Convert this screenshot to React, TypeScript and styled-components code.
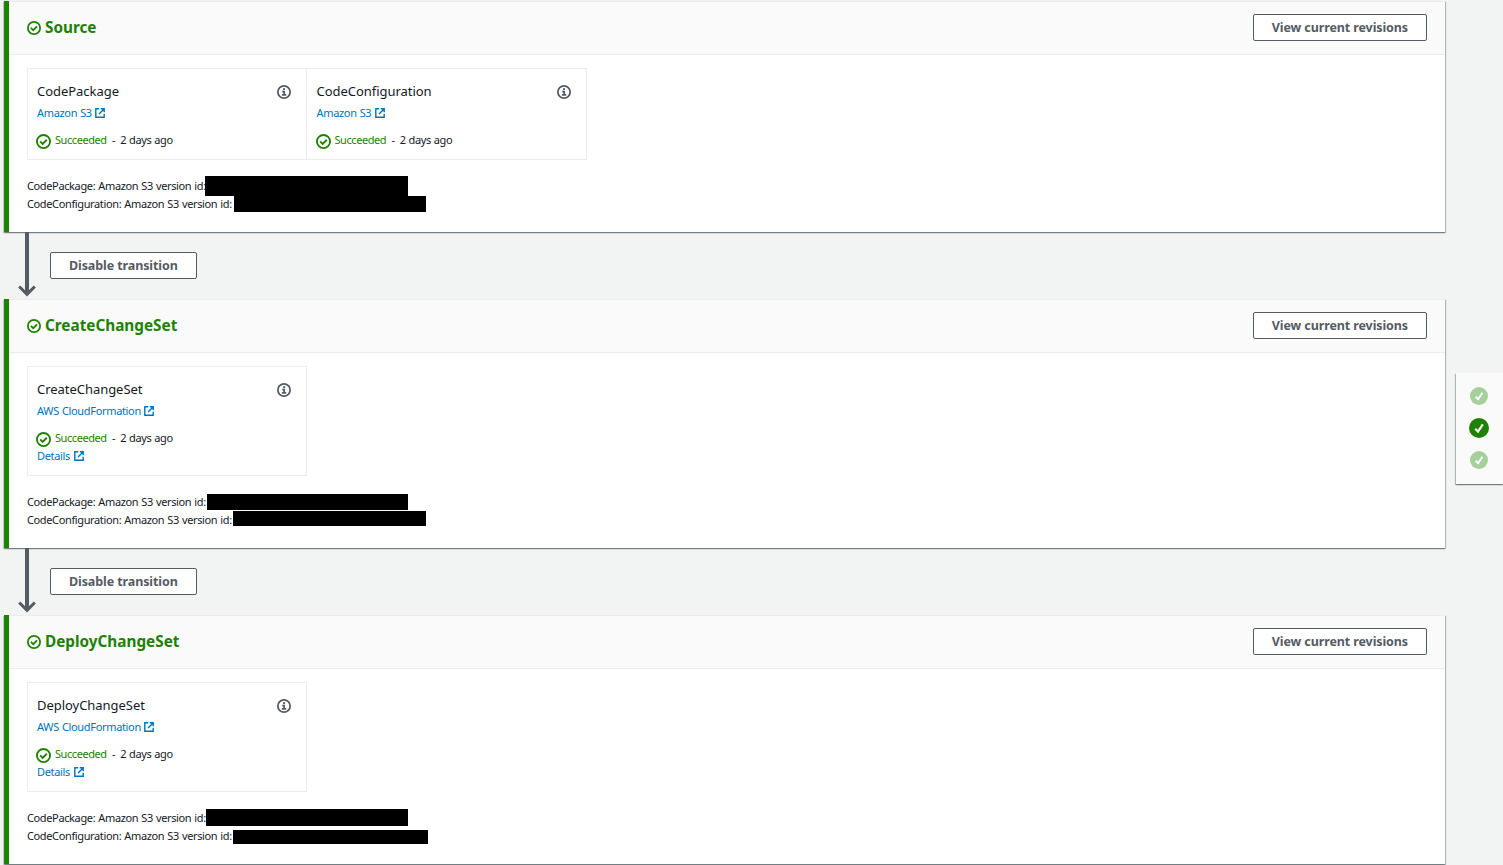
import React from "react";
import styled, { createGlobalStyle } from "styled-components";

interface Mask {
	left: number;
	top: number;
	width: number;
	height: number;
}

interface ActionData {
	name: string;
	provider: string;
	hasDetails?: boolean;
}

interface StageData {
	name: string;
	actions: ActionData[];
	masks: Mask[];
}

const stages: StageData[] = [
	{
		name: "Source",
		actions: [
			{ name: "CodePackage", provider: "Amazon S3" },
			{ name: "CodeConfiguration", provider: "Amazon S3" },
		],
		masks: [
			{ left: 178, top: -1, width: 203, height: 20 },
			{ left: 207, top: 1, width: 192, height: 16 },
		],
	},
	{
		name: "CreateChangeSet",
		actions: [
			{ name: "CreateChangeSet", provider: "AWS CloudFormation", hasDetails: true },
		],
		masks: [
			{ left: 180, top: 1, width: 201, height: 16 },
			{ left: 206, top: 0, width: 193, height: 15 },
		],
	},
	{
		name: "DeployChangeSet",
		actions: [
			{ name: "DeployChangeSet", provider: "AWS CloudFormation", hasDetails: true },
		],
		masks: [
			{ left: 179, top: 0, width: 202, height: 17 },
			{ left: 206, top: 3, width: 195, height: 14 },
		],
	},
];

const revisions = ["CodePackage", "CodeConfiguration"];

const CheckCircle: React.FC<{ size: number }> = ({ size }) => (
	<Icon width={size} height={size} viewBox="0 0 16 16">
		<circle cx="8" cy="8" r="7" stroke="#1d8102" strokeWidth="2" />
		<path d="M4.4 7.9l2.7 2.6 4.4-4.4" stroke="#1d8102" strokeWidth="2" />
	</Icon>
);

const InfoCircle: React.FC = () => (
	<Icon width={14} height={14} viewBox="0 0 16 16">
		<circle cx="8" cy="8" r="7" stroke="#545b64" strokeWidth="2" />
		<path d="M5.6 11.3h5M6 7.6h2.2v3.5" stroke="#545b64" strokeWidth="2" />
		<path d="M7 3.6h2.2v2.2H7z" fill="#545b64" />
	</Icon>
);

const External: React.FC = () => (
	<Icon width={10} height={10} viewBox="0 0 10 10">
		<path d="M4.2.8H.8v8.4h8.4V5.8" stroke="#0073bb" strokeWidth="1.4" />
		<path d="M5.8.8h3.4v3.4M9 1L4.1 5.9" stroke="#0073bb" strokeWidth="1.4" />
	</Icon>
);

const Action: React.FC<{ action: ActionData }> = ({ action }) => (
	<ActionCard>
		<ActionHead>
			<ActionName>{action.name}</ActionName>
			<InfoButton>
				<InfoCircle />
			</InfoButton>
		</ActionHead>
		<ProviderLink>
			{action.provider}
			<External />
		</ProviderLink>
		<StatusRow>
			<StatusIcon>
				<CheckCircle size={15} />
			</StatusIcon>
			<Succeeded>Succeeded</Succeeded>
			<Dash>-</Dash>
			<span>2 days ago</span>
		</StatusRow>
		{action.hasDetails && (
			<DetailsLink>
				Details
				<External />
			</DetailsLink>
		)}
	</ActionCard>
);

const Stage: React.FC<{ stage: StageData }> = ({ stage }) => (
	<StagePanel>
		<StageHeader>
			<StageTitle>
				<CheckCircle size={14} />
				<StageName>{stage.name}</StageName>
			</StageTitle>
			<Button>View current revisions</Button>
		</StageHeader>
		<StageBody>
			<Actions>
				{stage.actions.map((action) => (
					<Action key={action.name} action={action} />
				))}
			</Actions>
			<Revisions>
				{revisions.map((name, index) => (
					<Revision key={name}>
						{name}: Amazon S3 version id:
						<Redacted {...toMask(stage.masks[index])} />
					</Revision>
				))}
			</Revisions>
		</StageBody>
	</StagePanel>
);

const toMask = (mask: Mask) => ({
	$left: mask.left,
	$top: mask.top,
	$width: mask.width,
	$height: mask.height,
});

const App: React.FC = () => {
	return (
		<>
			<GlobalStyle />
			<Page>
				<Pipeline>
					{stages.map((stage, index) => (
						<React.Fragment key={stage.name}>
							{index > 0 && (
								<Transition>
									<Icon width={18} height={65} viewBox="0 0 18 65">
										<path d="M9 0v61" stroke="#545b64" strokeWidth="4" />
										<path d="M1.2 54.5L9 62.3l7.8-7.8" stroke="#545b64" strokeWidth="3" />
									</Icon>
									<Button>Disable transition</Button>
								</Transition>
							)}
							<Stage stage={stage} />
						</React.Fragment>
					))}
				</Pipeline>
				<Navigator>
					{stages.map((stage, index) => (
						<NavDot key={stage.name} $active={index === 1}>
							<Icon width={12} height={12} viewBox="0 0 12 12">
								<path d="M2.2 6.8l2.8 2.8 4.8-7.2" stroke="#fff" strokeWidth="2.2" />
							</Icon>
						</NavDot>
					))}
				</Navigator>
			</Page>
		</>
	);
};

export default App;

const GlobalStyle = createGlobalStyle`
	* {
		box-sizing: border-box;
	}
	body {
		margin: 0;
		background: #f2f3f3;
		font-family: "Noto Sans", "Open Sans", sans-serif;
		overflow: hidden;
	}
`;
const Page = styled.div`
	display: flex;
	justify-content: space-between;
	height: 865px;
	padding: 1px 0 0 4px;
	overflow: hidden;
`;
const Pipeline = styled.div`
	width: 1441px;
`;
const Icon = styled.svg`
	display: block;
	flex-shrink: 0;
	fill: none;
`;
const StagePanel = styled.section`
	border-left: 5px solid #1d8102;
	background: #fff;
	box-shadow: 0 1px 1px 0 rgba(0, 28, 36, 0.28), 1px 1px 1px 0 rgba(0, 28, 36, 0.24),
		-1px 1px 1px 0 rgba(0, 28, 36, 0.15);
`;
const StageHeader = styled.header`
	display: flex;
	justify-content: space-between;
	align-items: flex-start;
	height: 54px;
	padding: 12px 18px 0;
	border-top: 1px solid #eaeded;
	border-bottom: 1px solid #eaeded;
	background: #fafafa;
`;
const StageTitle = styled.h2`
	display: flex;
	align-items: center;
	gap: 4px;
	height: 28px;
	margin: 0;
	color: #1d8102;
	font-size: 15.3px;
	font-weight: 700;
	line-height: 22px;
`;
const StageName = styled.span`
	margin-top: -2px;
`;
const Button = styled.button`
	height: 27px;
	padding: 0 18px;
	border: 1px solid #545b64;
	border-radius: 2px;
	background: #fff;
	color: #545b64;
	font-family: inherit;
	font-size: 12.5px;
	font-weight: 700;
	line-height: 25px;
	letter-spacing: -0.1px;
	white-space: nowrap;
`;
const StageBody = styled.div`
	padding: 13px 18px 19px;
`;
const Actions = styled.div`
	display: flex;
`;
const ActionCard = styled.div`
	width: 280px;
	padding: 12px 15px 10px 9px;
	border: 1px solid #eaeded;

	& + & {
		padding-left: 9.5px;
		border-left: 0;
	}
`;
const ActionHead = styled.div`
	display: flex;
	justify-content: space-between;
	align-items: center;
	height: 20px;
`;
const ActionName = styled.div`
	color: #16191f;
	font-size: 13px;
	line-height: 20px;
	letter-spacing: -0.04px;
`;
const InfoButton = styled.span`
	margin-top: 2px;
`;
const ProviderLink = styled.a`
	display: flex;
	align-items: center;
	gap: 3.5px;
	margin-top: 3px;
	color: #0073bb;
	font-size: 11px;
	line-height: 18px;
	letter-spacing: -0.33px;
	word-spacing: 0.5px;
`;
const DetailsLink = styled(ProviderLink)`
	margin-top: 0;
`;
const StatusRow = styled.div`
	display: flex;
	align-items: center;
	height: 18px;
	margin-top: 9px;
	color: #16191f;
	font-size: 11px;
	line-height: 18px;
	letter-spacing: -0.38px;
	word-spacing: 0.4px;
`;
const StatusIcon = styled.span`
	margin: 2px 4px 0 -1px;
`;
const Succeeded = styled.span`
	color: #1d8102;
	letter-spacing: -0.44px;
`;
const Dash = styled.span`
	margin: 0 5px 0 5.5px;
`;
const Revisions = styled.div`
	margin-top: 17px;
`;
const Revision = styled.div`
	position: relative;
	color: #16191f;
	font-size: 11px;
	line-height: 18px;
	letter-spacing: -0.37px;
	word-spacing: 0.6px;
`;
const Redacted = styled.span<{
	$left: number;
	$top: number;
	$width: number;
	$height: number;
}>`
	position: absolute;
	left: ${({ $left }) => $left}px;
	top: ${({ $top }) => $top}px;
	width: ${({ $width }) => $width}px;
	height: ${({ $height }) => $height}px;
	background: #000;
`;
const Transition = styled.div`
	display: flex;
	align-items: flex-start;
	gap: 14px;
	height: 67px;
	padding-left: 14px;

	${Button} {
		margin-top: 20px;
	}
`;
const Navigator = styled.nav`
	display: flex;
	flex-direction: column;
	align-items: center;
	justify-content: center;
	gap: 12px;
	width: 47px;
	height: 111px;
	margin-top: 372px;
	padding: 0 2px 2px 0;
	background: #fafafa;
	box-shadow: 0 1px 1px 0 rgba(0, 28, 36, 0.28), 1px 1px 1px 0 rgba(0, 28, 36, 0.15),
		-1px 1px 1px 0 rgba(0, 28, 36, 0.24);
`;
const NavDot = styled.span<{ $active: boolean }>`
	display: flex;
	align-items: center;
	justify-content: center;
	width: 20px;
	height: 20px;
	border-radius: 50%;
	background: ${({ $active }) => ($active ? "#1d8102" : "#a5d099")};
	transform: scale(${({ $active }) => ($active ? 1 : 0.9)});
`;
